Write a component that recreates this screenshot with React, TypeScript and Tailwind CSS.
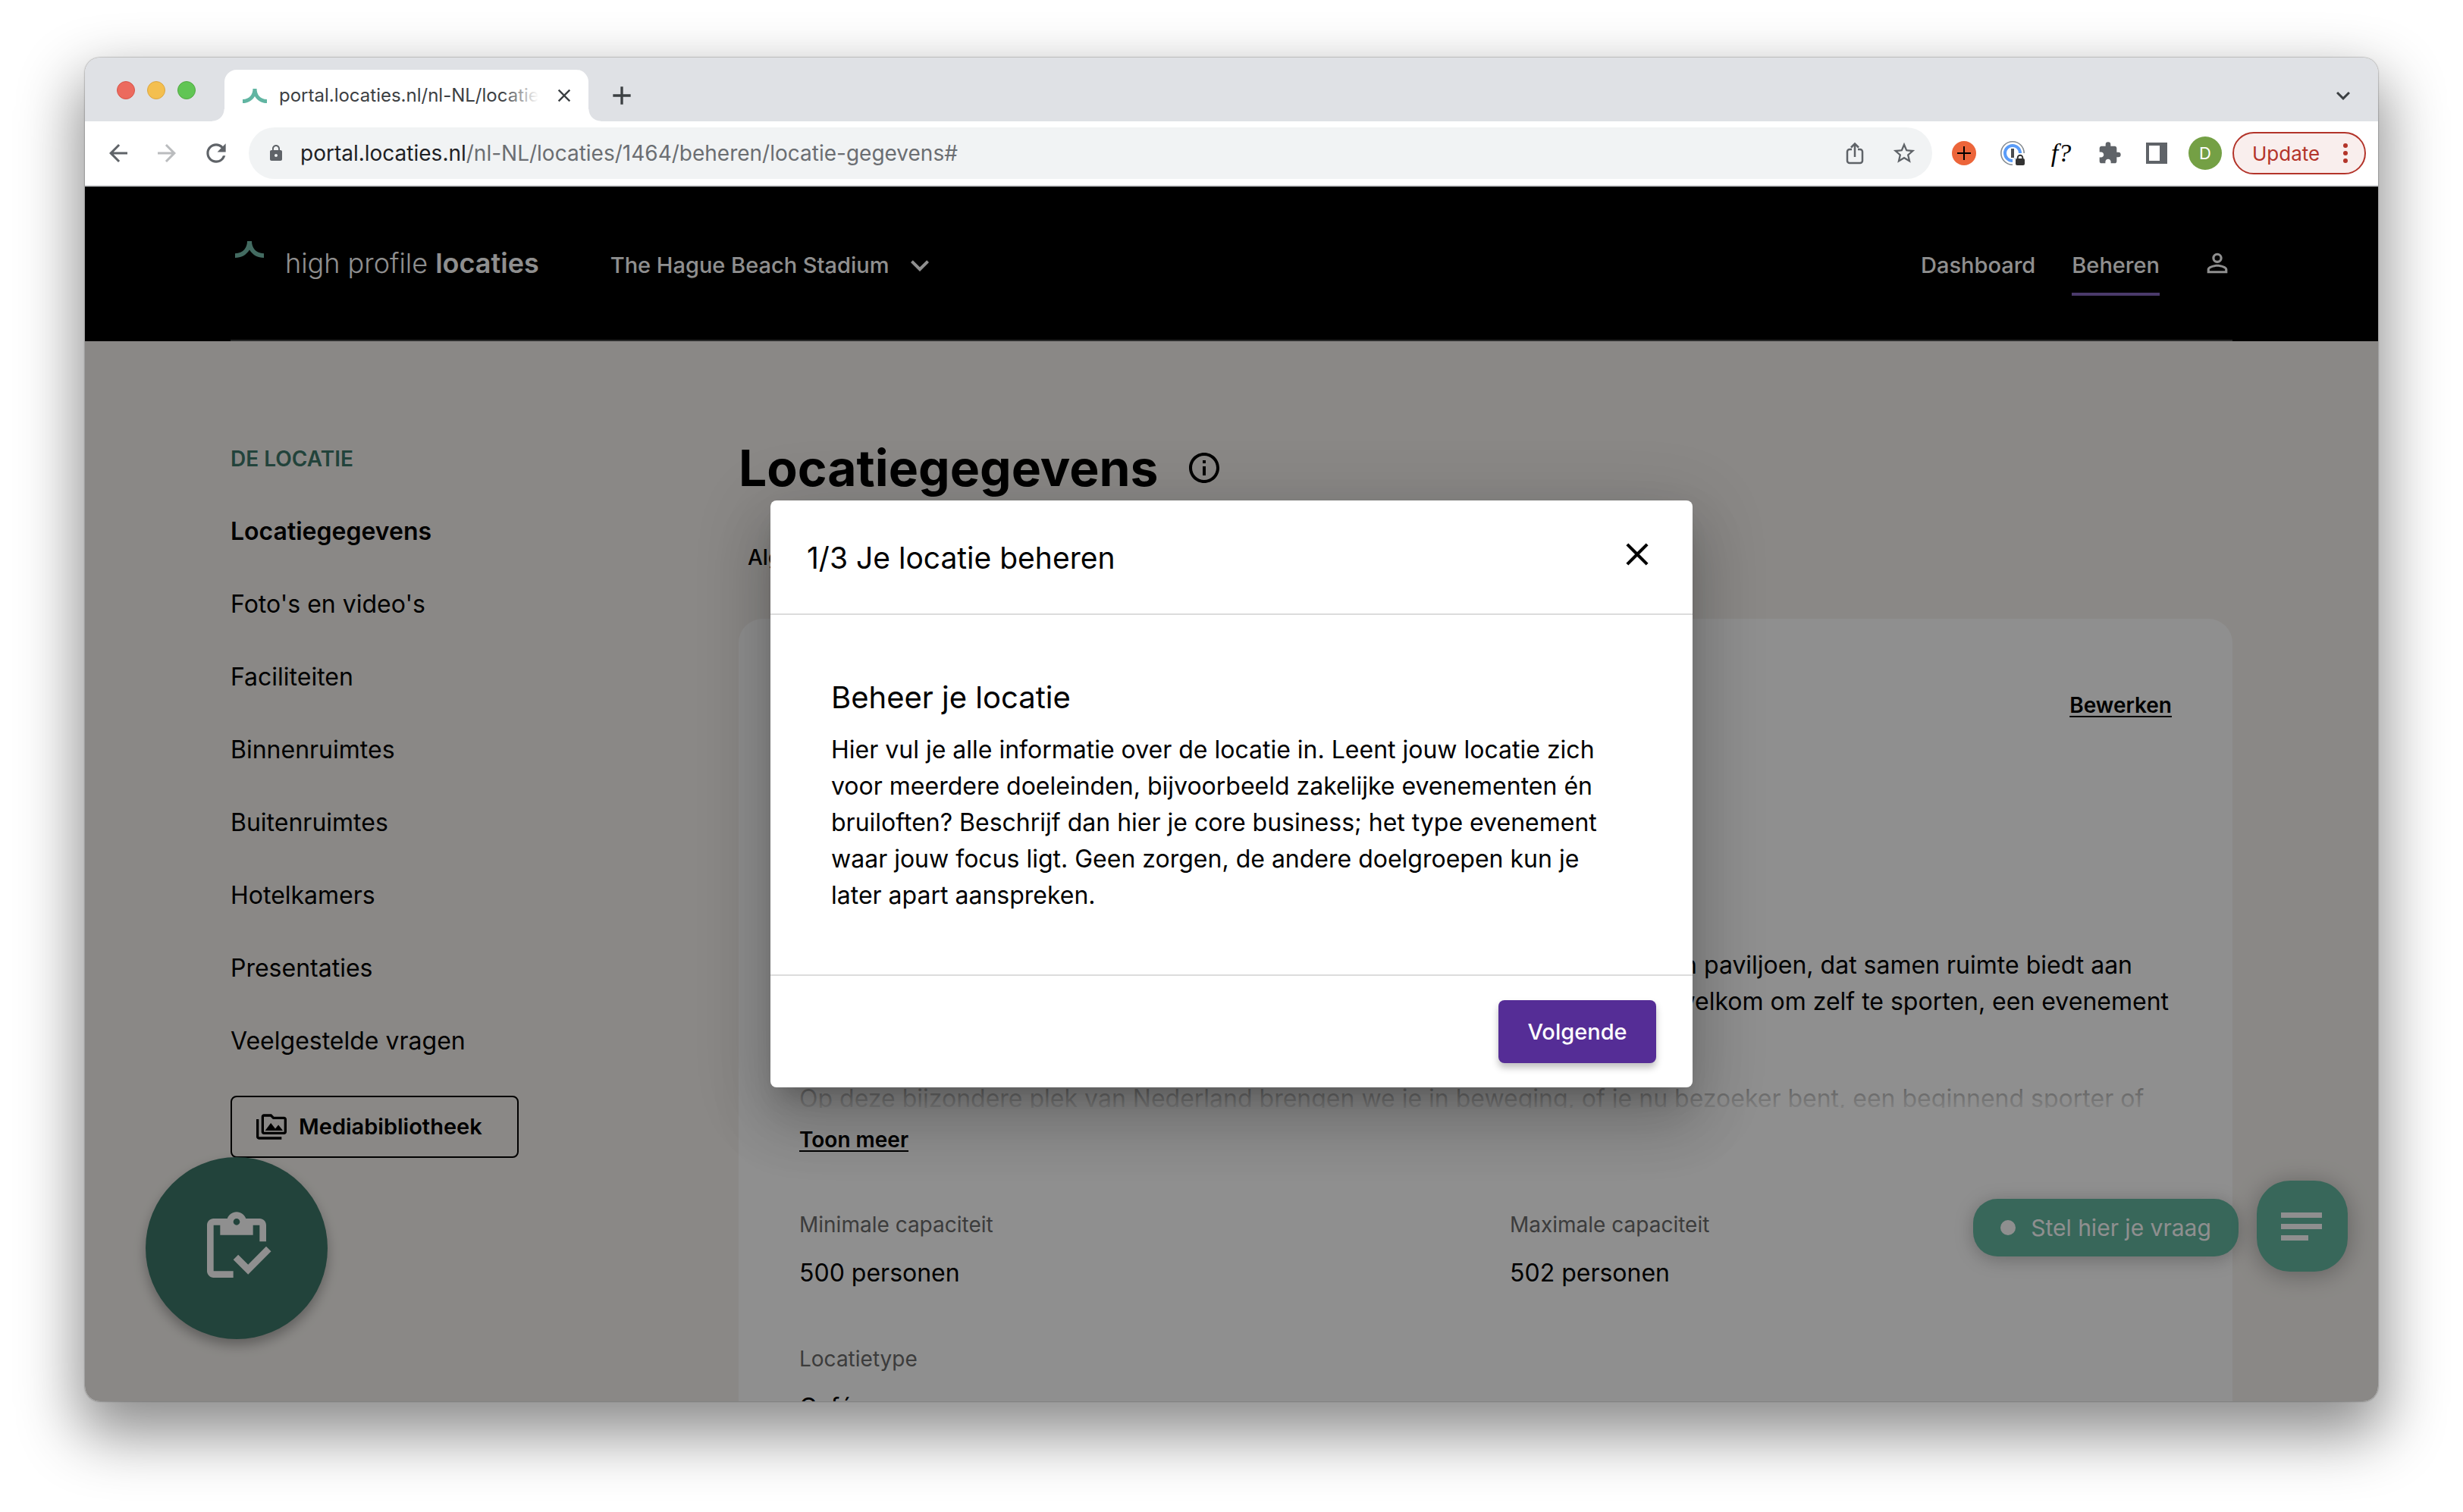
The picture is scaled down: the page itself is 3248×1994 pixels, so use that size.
import React from "react";
import {
  MdAdd,
  MdArrowBack,
  MdArrowForward,
  MdClose,
  MdExpandMore,
  MdExtension,
  MdLock,
  MdOutlineInfo,
  MdOutlineInventory,
  MdOutlinePermMedia,
  MdPersonOutline,
  MdRefresh,
  MdStarBorder,
} from "react-icons/md";

const navItems = [
  "Locatiegegevens",
  "Foto's en video's",
  "Faciliteiten",
  "Binnenruimtes",
  "Buitenruimtes",
  "Hotelkamers",
  "Presentaties",
  "Veelgestelde vragen",
];

function BrandMark({ className }: { className: string }) {
  return (
    <svg viewBox="0 0 38 22" preserveAspectRatio="none" className={className} aria-hidden="true">
      <path
        d="M16 0h6c0 8.500 5 16.200 16 16.200V22c-8 0-14.500-3.500-19-10.500C14.500 18.500 8 22 0 22v-5.800C11 16.200 16 8.500 16 0z"
        fill="currentColor"
      />
    </svg>
  );
}

function TabStrip() {
  return (
    <div className="flex h-[84px] shrink-0 items-end bg-[#dfe1e5] pr-7">
      <div className="flex items-center gap-4 self-stretch pt-0.5 pl-[42px] pr-[22px]">
        <button aria-label="Sluit venster" className="size-6 rounded-full border border-[#d75549] bg-[#ec6a5e]" />
        <button aria-label="Minimaliseer" className="size-6 rounded-full border border-[#dba642] bg-[#f4bf4f]" />
        <button aria-label="Vergroot" className="size-6 rounded-full border border-[#52a843] bg-[#61c554]" />
      </div>
      <div className="flex items-end">
        <div className="size-4 bg-[radial-gradient(circle_at_0_0,#dfe1e5_15px,#fff_16px)]" />
        <div className="flex h-[68px] w-[480px] items-center rounded-t-2xl bg-white pl-6 pr-[18px]">
          <BrandMark className="mr-4 h-[19px] w-8 shrink-0 text-[#61b5a2]" />
          <span className="relative min-w-0 flex-1 overflow-hidden whitespace-nowrap text-2xl text-[#3c4043]">
            portal.locaties.nl/nl-NL/locaties
            <span className="absolute inset-y-0 right-0 w-12 bg-linear-to-r from-white/0 to-white" />
          </span>
          <button aria-label="Sluit tabblad" className="ml-5 text-[#3c4043]">
            <MdClose className="size-7" />
          </button>
        </div>
        <div className="size-4 bg-[radial-gradient(circle_at_100%_0,#dfe1e5_15px,#fff_16px)]" />
      </div>
      <button aria-label="Nieuw tabblad" className="mb-3.5 ml-2 text-[#3c4043]">
        <MdAdd className="size-10" />
      </button>
      <button aria-label="Zoek tabbladen" className="mb-4 ml-auto text-[#3c4043]">
        <MdExpandMore className="size-9" />
      </button>
    </div>
  );
}

function ShareIcon() {
  return (
    <svg viewBox="0 0 24 30" className="h-[30px] w-6" fill="none" stroke="#5f6368" strokeWidth="2.500" aria-hidden="true">
      <path d="M8 10H5a3 3 0 0 0-3 3v12a3 3 0 0 0 3 3h14a3 3 0 0 0 3-3V13a3 3 0 0 0-3-3h-3M12 20V3M7 7.500l5-5 5 5" />
    </svg>
  );
}

function AddBadgeIcon() {
  return (
    <svg viewBox="0 0 32 32" className="size-8" aria-hidden="true">
      <circle cx="16" cy="16" r="16" fill="#ec653a" />
      <path d="M16 7v18M7 16h18" stroke="#000" strokeWidth="2" />
    </svg>
  );
}

function PasswordIcon() {
  return (
    <svg viewBox="0 0 32 32" className="size-8" aria-hidden="true">
      <circle cx="16" cy="16" r="15.200" fill="#fff" stroke="#858b91" strokeWidth="1.600" />
      <circle cx="16" cy="16" r="10" fill="#fff" stroke="#5a9cf8" strokeWidth="4" />
      <rect x="14" y="10" width="4" height="12" fill="#4a4d51" />
      <path d="M20 16h12v16H16v-8h4z" fill="#fff" />
      <rect x="20" y="23" width="12" height="9" rx="2" fill="#333" />
      <path d="M22.700 24v-2a3.300 3.300 0 0 1 6.600 0v2" fill="none" stroke="#333" strokeWidth="2" />
    </svg>
  );
}

function Toolbar() {
  return (
    <div className="flex h-[86px] shrink-0 items-center border-b-2 border-[#d5d6d8] bg-white px-4">
      <div className="flex w-[200px] items-center gap-7 pl-2.5 text-[#5f6368]">
        <button aria-label="Terug">
          <MdArrowBack className="size-9" />
        </button>
        <button aria-label="Vooruit" className="text-[#babcbe]">
          <MdArrowForward className="size-9" />
        </button>
        <button aria-label="Vernieuwen">
          <MdRefresh className="size-[38px]" />
        </button>
      </div>
      <div className="flex h-[68px] flex-1 items-center rounded-full bg-[#f1f3f4] pl-6 pr-5">
        <MdLock className="mr-5 size-6 text-[#5f6368]" />
        <div role="textbox" aria-label="Adres" className="flex-1 whitespace-nowrap text-[28px] text-[#6b6e72]">
          <span className="text-[#202124]">portal.locaties.nl</span>/nl-NL/locaties/1464/beheren/locatie-gegevens#
        </div>
        <button aria-label="Delen" className="mr-9">
          <ShareIcon />
        </button>
        <button aria-label="Bladwijzer" className="text-[#5f6368]">
          <MdStarBorder className="size-[34px]" />
        </button>
      </div>
      <div className="flex items-center gap-8 pl-[26px]">
        <button aria-label="Toevoegen">
          <AddBadgeIcon />
        </button>
        <button aria-label="Wachtwoorden">
          <PasswordIcon />
        </button>
        <button aria-label="Lettertype" className="w-8 whitespace-nowrap font-['Liberation_Serif',serif] text-[34px] leading-8 text-black italic">
          f?
        </button>
        <button aria-label="Extensies" className="text-[#5f6368]">
          <MdExtension className="size-8" />
        </button>
        <button aria-label="Zijpaneel" className="h-7 w-7 border-4 border-r-[10px] border-[#5f6368]" />
      </div>
      <button aria-label="Profiel" className="ml-7 flex size-11 items-center justify-center rounded-full bg-[#74a045] text-[22px] text-white">
        D
      </button>
      <button className="ml-3.5 flex h-14 w-44 items-center justify-between rounded-full border-2 border-[#b3342a] bg-[#f9eeed] pl-6 pr-[22px] text-[26px] text-[#b3342a]">
        Update
        <svg viewBox="0 0 6 28" className="h-7 w-1.5" fill="currentColor" aria-hidden="true">
          <circle cx="3" cy="4" r="3" />
          <circle cx="3" cy="14" r="3" />
          <circle cx="3" cy="24" r="3" />
        </svg>
      </button>
    </div>
  );
}

function SiteHeader() {
  return (
    <header className="bg-black px-48 text-white">
      <div className="flex h-[204px] items-center border-b-2 border-white/30">
        <a href="#" className="flex items-center gap-7 pl-1.5">
          <BrandMark className="mb-9 h-[22px] w-[38px] text-[#78bfae]" />
          <span className="whitespace-nowrap text-[36px] leading-10 font-light">
            high profile <b className="font-semibold">locaties</b>
          </span>
        </a>
        <button className="ml-[94px] flex items-center gap-4 pt-1.5 text-[29px] leading-10 font-medium">
          The Hague Beach Stadium
          <MdExpandMore className="size-12" />
        </button>
        <nav className="ml-auto flex items-center gap-12 pt-1.5 text-[29px] leading-10 font-medium">
          <a href="#">Dashboard</a>
          <a href="#" className="relative">
            Beheren
            <span className="absolute inset-x-0 top-14 h-1 bg-[#8468bf]" />
          </a>
          <button aria-label="Account" className="mb-1.5 ml-2">
            <MdPersonOutline className="size-10" />
          </button>
        </nav>
      </div>
    </header>
  );
}

function Sidebar() {
  return (
    <aside className="w-[670px] shrink-0 pt-[135px]">
      <h2 className="mb-7 text-[28px] leading-10 font-semibold text-[#3d7869]">DE LOCATIE</h2>
      <nav className="flex flex-col items-start">
        {navItems.map((item, i) => (
          <a
            key={item}
            href="#"
            className={
              i === 0
                ? "flex h-24 items-center text-[32px] font-semibold"
                : "flex h-24 items-center text-[32px]"
            }
          >
            {item}
          </a>
        ))}
      </nav>
      <button className="mt-6 flex h-[82px] w-[380px] items-center gap-4 rounded-lg border-2 border-black pl-8 text-[29px] font-semibold">
        <MdOutlinePermMedia className="size-10" />
        Mediabibliotheek
      </button>
    </aside>
  );
}

function Field({ label, value }: { label: string; value: string }) {
  return (
    <div>
      <dt className="text-[28px] leading-10 text-[#6b6b6b]">{label}</dt>
      <dd className="mt-5 text-[32px] leading-[48px]">{value}</dd>
    </div>
  );
}

function LocationCard() {
  return (
    <section className="rounded-t-[32px] bg-white px-20 pt-[94px] pb-24">
      <div className="flex justify-end">
        <a href="#" className="text-[28px] leading-10 font-semibold underline decoration-2 underline-offset-4">
          Bewerken
        </a>
      </div>
      <div className="relative mt-[299px] h-[212px] overflow-hidden text-[32px] leading-[48px] whitespace-nowrap">
        <p className="flex flex-col items-end">
          <span className="pr-[52px]">een paviljoen, dat samen ruimte biedt aan</span>
          <span className="pr-1">welkom om zelf te sporten, een evenement</span>
        </p>
        <p className="mt-20">
          Op deze bijzondere plek van Nederland brengen we je in beweging, of je nu bezoeker bent, een beginnend sporter of
        </p>
        <div className="absolute inset-x-0 bottom-0 h-16 bg-linear-to-b from-white/40 to-white/90" />
      </div>
      <a
        href="#"
        className="mt-[22px] block w-fit text-[28px] leading-10 font-semibold underline decoration-2 underline-offset-4"
      >
        Toon meer
      </a>
      <dl className="mt-[72px] grid grid-cols-2 gap-x-16 gap-y-[69px]">
        <Field label="Minimale capaciteit" value="500 personen" />
        <Field label="Maximale capaciteit" value="502 personen" />
        <Field label="Locatietype" value="Café" />
      </dl>
    </section>
  );
}

function TourModal() {
  return (
    <div className="absolute inset-0 flex items-center justify-center bg-black/44">
      <div
        role="dialog"
        aria-labelledby="tour-title"
        className="w-[1216px] rounded-lg bg-white shadow-[0_22px_30px_-14px_rgba(0,0,0,0.2),0_48px_76px_6px_rgba(0,0,0,0.14),0_18px_92px_16px_rgba(0,0,0,0.12)]"
      >
        <div className="flex h-[151px] items-center justify-between border-b-2 border-[#dcdcdc] px-12">
          <h2 id="tour-title" className="pt-1 text-[39px]">
            1/3 Je locatie beheren
          </h2>
          <button aria-label="Sluiten" className="mb-2">
            <MdClose className="size-[50px]" />
          </button>
        </div>
        <div className="px-20 pt-[84px] pb-20">
          <h3 className="text-[40px] leading-[50px]">Beheer je locatie</h3>
          <p className="mt-5 text-[32px] leading-[48px] whitespace-nowrap">
            Hier vul je alle informatie over de locatie in. Leent jouw locatie zich
            <br />
            voor meerdere doeleinden, bijvoorbeeld zakelijke evenementen én
            <br />
            bruiloften? Beschrijf dan hier je core business; het type evenement
            <br />
            waar jouw focus ligt. Geen zorgen, de andere doelgroepen kun je
            <br />
            later apart aanspreken.
          </p>
        </div>
        <div className="flex justify-end border-t-2 border-[#dcdcdc] px-12 py-8">
          <button className="h-[83px] w-52 rounded-lg bg-[#552d96] text-[29px] font-medium text-white shadow-[0_6px_10px_rgba(0,0,0,0.25)]">
            Volgende
          </button>
        </div>
      </div>
    </div>
  );
}

function FloatingActions() {
  return (
    <>
      <button
        aria-label="Checklist"
        className="absolute bottom-[82px] left-20 flex size-60 items-center justify-center rounded-full bg-[#3d7869] text-white shadow-[0_8px_16px_rgba(0,0,0,0.3)]"
      >
        <MdOutlineInventory className="size-[104px]" />
      </button>
      <div className="absolute right-10 bottom-[171px] flex items-center gap-6">
        <button className="mt-1 flex h-[76px] w-[350px] items-center justify-center gap-5 rounded-[32px] bg-[#64b8a1] text-[30px] text-white shadow-[0_4px_24px_rgba(0,0,0,0.25)]">
          <span className="size-5 rounded-full bg-white" />
          Stel hier je vraag
        </button>
        <button
          aria-label="Open chat"
          className="flex size-[120px] flex-col justify-center gap-2 rounded-[44px] bg-[#64b8a1] pl-8 shadow-[0_4px_32px_rgba(0,0,0,0.3)]"
        >
          <span className="h-[7px] w-[54px] bg-white" />
          <span className="h-[7px] w-[54px] bg-white" />
          <span className="h-[7px] w-9 bg-white" />
        </button>
      </div>
    </>
  );
}

export default function App() {
  return (
    <div className="flex h-screen flex-col overflow-hidden bg-white px-28 pt-[76px] pb-[146px] font-['Inter',sans-serif] text-black">
      <div className="flex min-h-0 flex-1 flex-col overflow-hidden rounded-[20px] shadow-[0_0_2px_rgba(0,0,0,0.6),0_36px_80px_8px_rgba(0,0,0,0.45)]">
        <TabStrip />
        <Toolbar />
        <div className="relative min-h-0 flex-1 overflow-hidden bg-[#f6f3ef]">
          <SiteHeader />
          <div className="flex px-48">
            <Sidebar />
            <main className="min-w-0 flex-1 pt-[119px]">
              <div className="flex items-center gap-9">
                <h1 className="text-[66px] leading-[96px] font-bold">Locatiegegevens</h1>
                <button aria-label="Informatie">
                  <MdOutlineInfo className="size-12" />
                </button>
              </div>
              <div className="mt-[50px] mb-[61px] pl-3 text-[28px] leading-10 font-medium">
                <a href="#">Algemeen</a>
              </div>
              <LocationCard />
            </main>
          </div>
          <FloatingActions />
          <TourModal />
        </div>
      </div>
    </div>
  );
}
